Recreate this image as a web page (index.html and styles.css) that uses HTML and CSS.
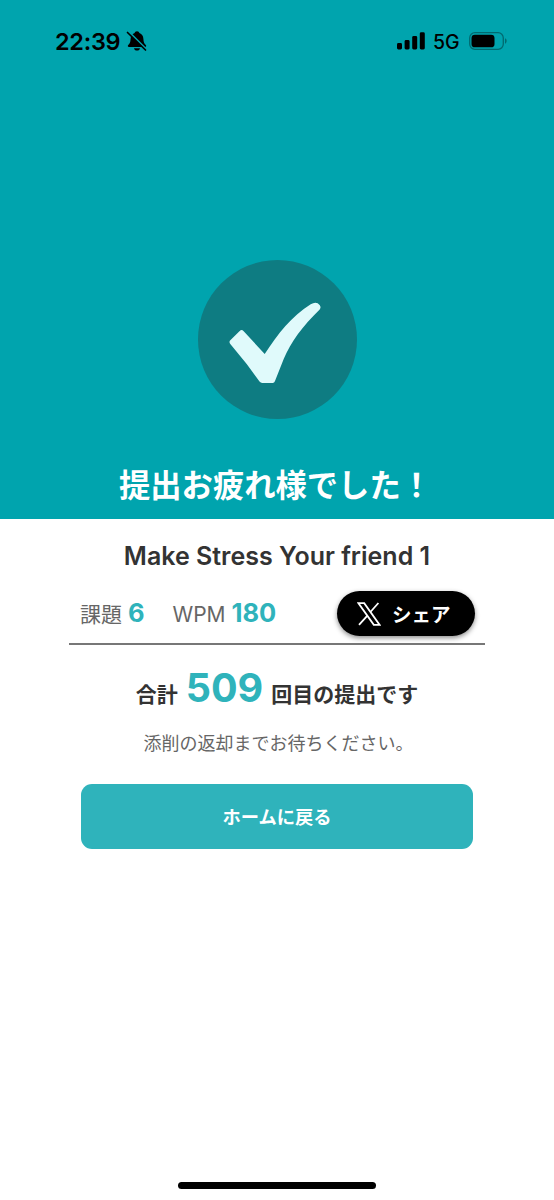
FILE: index.html
```html
<!DOCTYPE html>
<html lang="ja">
<head>
    <meta charset="UTF-8">
    <meta name="viewport" content="width=device-width, initial-scale=1.0">
    <title>提出完了</title>
    <link rel="stylesheet" href="styles.css">
</head>
<body>
<div class="screen">
    <header class="hero">
        <div class="status-bar">
            <span class="time">22:39</span>
            <svg class="bell" width="22" height="22" viewBox="0 0 22 22">
                <path d="M11 1.2C12.3 1.2 13.2 2 13.4 3.1C16 4 17.2 6 17.4 9C17.6 12.5 18.3 13.6 19.8 15C20.6 15.9 20.2 17 19 17H3C1.8 17 1.4 15.9 2.2 15C3.7 13.6 4.4 12.5 4.6 9C4.8 6 6 4 8.6 3.1C8.8 2 9.7 1.2 11 1.2Z"/>
                <path d="M8 18.2H14C13.7 19.7 12.6 20.6 11 20.6C9.4 20.6 8.3 19.7 8 18.2Z"/>
                <path class="bell-gap" d="M2.5 1.5L20.5 19.5"/>
                <path class="bell-slash" d="M1.5 2.5L19.5 20"/>
            </svg>
            <div class="status-right">
                <svg class="signal" width="28" height="18" viewBox="0 0 28 18">
                    <rect x="0" y="11" width="5" height="6.5" rx="1.4"/>
                    <rect x="7.6" y="8" width="5" height="9.5" rx="1.4"/>
                    <rect x="15.2" y="4" width="5" height="13.5" rx="1.4"/>
                    <rect x="22.8" y="0.3" width="5" height="17.2" rx="1.4"/>
                </svg>
                <span class="network">5G</span>
                <svg class="battery" width="39" height="18" viewBox="0 0 39 18">
                    <rect class="battery-frame" x="0.7" y="0.7" width="33.6" height="16.6" rx="5.2"/>
                    <rect x="2.5" y="2.7" width="23" height="12.6" rx="3.4"/>
                    <path class="battery-cap" d="M36 6.3C38.2 7.1 38.2 10.9 36 11.7Z"/>
                </svg>
            </div>
        </div>
        <div class="check-circle">
            <svg width="159" height="159" viewBox="8.3 10 159 159">
                <path d="M40.6 90.3L50 80.9Q52 79.2 54 81.2L75 104C88 84 102 66 121 54.2Q125 51.8 128 53.2Q132.4 56 130 59.5C113 76 101 92 94 109L85.2 131.3Q84.6 133 83 133H72.5Q71 133 69.8 131.6L57 114L40.6 94Q39 92 40.6 90.3Z"/>
            </svg>
        </div>
        <h1>提出お疲れ様でした！</h1>
    </header>

    <main>
        <h2>Make Stress Your friend 1</h2>
        <div class="info">
            <div class="stat task">課題 <b>6</b></div>
            <div class="stat">WPM <b>180</b></div>
            <button class="share">
                <svg width="24" height="24" viewBox="0 0 24 24">
                    <path d="M1.5 1.2H7.2L22.5 22.8H16.8Z"/>
                    <path d="M21.4 1L13.4 10M10.4 13.6L2 22.9"/>
                </svg>
                <span>シェア</span>
            </button>
        </div>
        <p class="total"><span>合計</span><b>509</b><span>回目の提出です</span></p>
        <p class="note">添削の返却までお待ちください。</p>
        <button class="home">ホームに戻る</button>
    </main>
    <div class="home-indicator"></div>
</div>
</body>
</html>
```
FILE: styles.css
```css
* {
    box-sizing: border-box;
}

body {
    margin: 0;
    font-family: Inter, "Noto Sans CJK JP", sans-serif;
    background-color: #fff;
    color: #333;
}

h1, h2, p {
    margin: 0;
}

button {
    border: none;
    font-family: inherit;
    color: #fff;
    cursor: pointer;
}

.screen {
    display: flex;
    flex-direction: column;
    height: 1200px;
}

.hero {
    display: flex;
    flex-direction: column;
    align-items: center;
    height: 519px;
    background-color: #00a4ae;
}

.status-bar {
    display: flex;
    align-items: center;
    width: 100%;
    height: 82px;
    padding: 0 46px 0 55px;
    color: #000;
}

.time {
    width: 66px;
    font-size: 23.5px;
    font-weight: 600;
    letter-spacing: -0.3px;
}

.bell {
    margin-left: 5px;
}

.bell-gap {
    stroke: #00a4ae;
    stroke-width: 1.8;
}

.bell-slash {
    stroke: #000;
    stroke-width: 1.7;
    stroke-linecap: round;
}

.status-right {
    display: flex;
    align-items: center;
    margin-left: auto;
}

.network {
    width: 28px;
    margin: 2px 8px 0 8px;
    font-size: 19.5px;
    font-weight: 500;
}

.battery-frame {
    fill: none;
    stroke: #006a70;
    stroke-width: 1.3;
}

.battery-cap {
    fill: #006a70;
}

.check-circle {
    width: 159px;
    height: 159px;
    margin-top: 178px;
    border-radius: 50%;
    background-color: #0e7c82;
}

.check-circle svg {
    display: block;
    fill: #e0fafb;
}

h1 {
    margin: 44px 3px 0 0;
    font-size: 31.3px;
    font-weight: 700;
    line-height: 46px;
    color: #fff;
}

main {
    display: flex;
    flex-direction: column;
    align-items: center;
}

h2 {
    margin-top: 20px;
    font-size: 25px;
    font-weight: 600;
    line-height: 34px;
}

.info {
    display: flex;
    align-items: center;
    width: 416px;
    height: 54px;
    margin-top: 18px;
    padding: 0 10px 7px 11px;
    border-bottom: 2px solid #777;
}

.stat {
    padding-top: 1px;
    font-size: 21px;
    line-height: 30px;
    color: #666;
}

.stat b {
    font-size: 25.5px;
    font-weight: 700;
    color: #2fb3bb;
}

.task {
    margin-right: 28px;
}

.share {
    display: flex;
    align-items: center;
    gap: 11px;
    width: 138px;
    height: 45px;
    margin-left: auto;
    padding: 0 0 0 20px;
    border-radius: 23px;
    background-color: #000;
    box-shadow: 0 2px 5px rgba(0, 0, 0, 0.45);
    font-size: 19.5px;
    font-weight: 700;
}

.share svg {
    fill: none;
    stroke: #fff;
    stroke-width: 1.8;
}

.total {
    display: flex;
    align-items: baseline;
    height: 60px;
    margin-top: 13px;
    font-size: 21px;
    font-weight: 700;
    line-height: 60px;
}

.total b {
    margin: 0 8px;
    font-size: 39.5px;
    font-weight: 700;
    color: #2fb3bb;
}

.note {
    margin: 12px 0 0 3px;
    font-size: 18px;
    line-height: 28px;
    color: #666;
}

.home {
    width: 392px;
    height: 65px;
    margin-top: 26px;
    padding-bottom: 3px;
    border-radius: 11px;
    background-color: #2fb3bb;
    font-size: 18.3px;
    font-weight: 700;
}

.home-indicator {
    width: 198px;
    height: 7px;
    margin: auto auto 11px;
    border-radius: 4px;
    background-color: #000;
}
```
